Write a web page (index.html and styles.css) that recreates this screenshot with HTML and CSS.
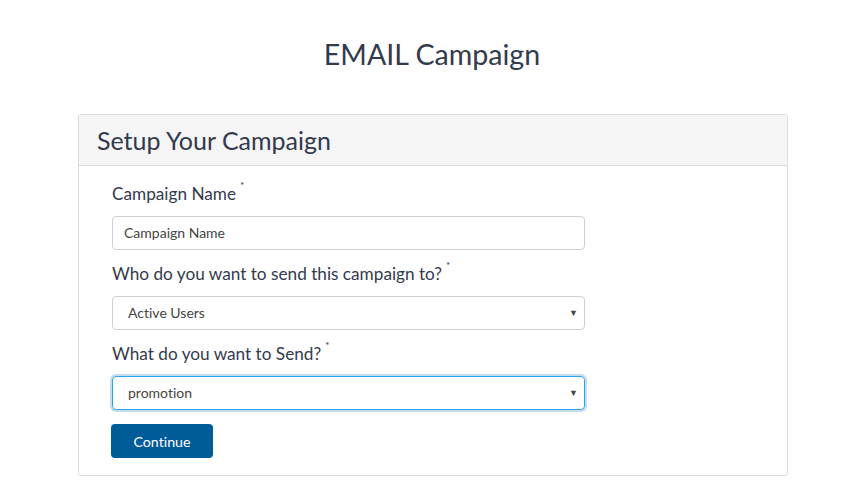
FILE: index.html
```html
<!DOCTYPE html>
<html>
<head>
<meta charset="utf-8">
<link rel="stylesheet" href="styles.css">
</head>
<body>
<h1 class="title">EMAIL Campaign</h1>
<div class="panel">
  <div class="panel-head">Setup Your Campaign</div>
  <div class="panel-body">
    <form class="form">
      <label class="label">Campaign Name<span class="req">*</span></label>
      <div class="field"><span class="ph">Campaign Name</span></div>
      <label class="label">Who do you want to send this campaign to?<span class="req">*</span></label>
      <div class="field select"><span>Active Users</span><span class="caret">▼</span></div>
      <label class="label">What do you want to Send?<span class="req">*</span></label>
      <div class="field select focus"><span>promotion</span><span class="caret">▼</span></div>
      <div class="btn">Continue</div>
    </form>
  </div>
</div>
</body>
</html>
```
FILE: styles.css
```css
* { box-sizing: border-box; }
body {
  margin: 0;
  background: #fff;
  font-family: Lato, "Open Sans", sans-serif;
  font-variant-ligatures: none;
  color: #333a4d;
}
.title {
  margin: 37px 0 0;
  padding-left: 1px;
  text-align: center;
  font-weight: 400;
  font-size: 28.6px;
  line-height: 34px;
  color: #333a4d;
}
.panel {
  width: 710px;
  margin: 43px 0 0 78px;
  border: 1px solid #dcdcdc;
  border-radius: 3px;
}
.panel-head {
  height: 51px;
  background: #f5f5f5;
  border-bottom: 1px solid #dcdcdc;
  padding: 10px 18px 0;
  font-size: 25px;
  line-height: 30px;
  color: #333a4d;
}
.panel-body {
  padding: 17px 0 17px 33px;
}
.form {
  width: 473px;
  display: flex;
  flex-direction: column;
}
.label {
  display: flex;
  align-items: flex-start;
  font-size: 17.2px;
  line-height: 22px;
  color: #333a4d;
  margin-bottom: 11px;
}
.req {
  font-size: 10px;
  line-height: 10px;
  margin-left: 4px;
  margin-top: -3px;
}
.field {
  height: 34px;
  border: 1px solid #ccd0d6;
  border-radius: 4px;
  font-size: 14px;
  line-height: 16px;
  color: #444;
  display: flex;
  align-items: center;
  padding: 0 11px 1px;
  margin-bottom: 13px;
}
.select { padding-left: 15px; justify-content: space-between; padding-right: 6px; }
.caret { font-size: 9px; color: #444; }
.focus {
  border-color: #2da2f3;
  box-shadow: 0 0 0 2px #c5ddee;
}
.btn {
  align-self: flex-start;
  margin-left: -1px;
  margin-top: 1px;
  width: 102px;
  height: 34px;
  background: #005c99;
  border-radius: 4px;
  color: #fff;
  font-size: 14.2px;
  display: flex;
  align-items: center;
  justify-content: center;
}
```
